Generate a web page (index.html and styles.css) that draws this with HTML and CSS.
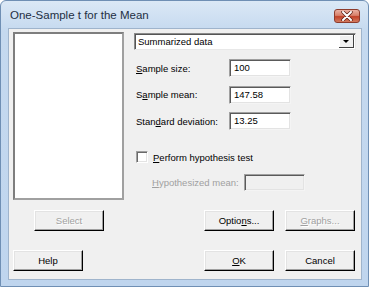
FILE: index.html
```html
<!DOCTYPE html>
<html lang="en">
<head>
    <meta charset="UTF-8">
    <title>One-Sample t for the Mean</title>
    <link rel="stylesheet" href="styles.css">
</head>
<body>
    <div class="window">
        <div class="titlebar">
            <span class="title">One-Sample t for the Mean</span>
            <span class="close">
                <svg width="12" height="10" viewBox="0 0 12 10">
                    <path d="M2 1 L10 9 M10 1 L2 9" stroke="#5a1e14" stroke-width="3.4" stroke-linecap="round"/>
                    <path d="M2 1 L10 9 M10 1 L2 9" stroke="#fff" stroke-width="2" stroke-linecap="round"/>
                </svg>
            </span>
        </div>

        <div class="client">
            <div class="main">
                <div class="varlist"></div>

                <div class="panel">
                    <div class="combo">
                        <span class="combo-text">Summarized data</span>
                        <span class="combo-btn"><span class="tri"></span></span>
                    </div>

                    <div class="fields">
                        <label class="lbl"><u>S</u>ample size:</label>
                        <div class="field">100</div>
                        <label class="lbl">S<u>a</u>mple mean:</label>
                        <div class="field">147.58</div>
                        <label class="lbl">Stan<u>d</u>ard deviation:</label>
                        <div class="field">13.25</div>
                    </div>

                    <div class="check-row">
                        <span class="checkbox"></span>
                        <span><u>P</u>erform hypothesis test</span>
                    </div>

                    <div class="hyp-row">
                        <span class="lbl disabled"><u>H</u>ypothesized mean:</span>
                        <div class="field off"></div>
                    </div>
                </div>
            </div>

            <div class="btn-row first">
                <div class="btn disabled select">Select</div>
                <div class="btn">Optio<u>n</u>s...</div>
                <div class="btn disabled"><u>G</u>raphs...</div>
            </div>

            <div class="btn-row second">
                <div class="btn help">Help</div>
                <div class="btn"><u>O</u>K</div>
                <div class="btn">Cancel</div>
            </div>
        </div>
    </div>
</body>
</html>
```

FILE: styles.css
```css
body {
    margin: 0;
    padding: 0;
    background-color: #ffffff;
    font-family: "Liberation Sans", Arial, sans-serif;
    font-size: 8.5px;
    color: #000;
}

.window {
    width: 369px;
    height: 287px;
    box-sizing: border-box;
    border: 1px solid #6f8fb4;
    border-radius: 6px 6px 0 0;
    background: linear-gradient(to bottom, #dbe8f6 0%, #c5d9ef 30px, #bfd5ee 100%);
    display: flex;
    flex-direction: column;
    padding: 0 6px 6px 7px;
}

.titlebar {
    height: 27px;
    display: flex;
    align-items: flex-start;
    justify-content: space-between;
}

.title {
    margin-top: 8px;
    margin-left: 2px;
    font-family: "Liberation Sans", Arial, sans-serif;
    font-size: 11.5px;
    color: #1e2f44;
}

.close {
    margin-top: 8px;
    margin-right: 2px;
    width: 26px;
    height: 14px;
    box-sizing: border-box;
    border: 1px solid #8d3b2c;
    border-radius: 3px;
    background: linear-gradient(to bottom, #eab0a2 0%, #d8806a 45%, #c24128 55%, #d27a5f 100%);
    display: flex;
    align-items: center;
    justify-content: center;
}

.client {
    flex: 1;
    background-color: #f0f0f0;
    border: 1px solid #9fb4cc;
    padding: 3px 5px 0 4px;
}

.main {
    display: flex;
    gap: 10px;
}

.varlist {
    width: 113px;
    height: 168px;
    box-sizing: border-box;
    background: #fff;
    border: 2px solid #8c8c8c;
    border-color: #7e7e7e #a0a0a0 #a0a0a0 #7e7e7e;
}

.panel {
    display: flex;
    flex-direction: column;
    padding-top: 1px;
}

.combo {
    width: 222px;
    height: 17px;
    box-sizing: border-box;
    background: #fff;
    border: 1px solid;
    border-color: #8a8a8a #e8e8e8 #e8e8e8 #8a8a8a;
    box-shadow: inset 1px 1px 0 #555;
    display: flex;
    justify-content: space-between;
    align-items: stretch;
}

.combo-text {
    padding-left: 3px;
    line-height: 15px;
    font-size: 9.5px;
}

.combo-btn {
    width: 14px;
    margin: 1px;
    background: #f0f0f0;
    border-right: 1px solid #404040;
    border-bottom: 1px solid #404040;
    box-shadow: inset 1px 1px 0 #fff;
    display: flex;
    align-items: center;
    justify-content: center;
}

.tri {
    width: 0;
    height: 0;
    border-left: 3px solid transparent;
    border-right: 3px solid transparent;
    border-top: 3px solid #000;
}

.fields {
    margin-top: 9px;
    display: grid;
    grid-template-columns: 93px 62px;
    row-gap: 8.5px;
    align-items: center;
    padding-left: 2px;
}

.lbl {
    font-size: 9.5px;
}

.field {
    height: 18px;
    box-sizing: border-box;
    background: #fff;
    border: 1px solid;
    border-color: #a0a0a0 #f4f4f4 #f4f4f4 #a0a0a0;
    box-shadow: inset 1px 1px 0 #5a5a5a, inset -1px -1px 0 #e3e3e3;
    padding-left: 4px;
    line-height: 16px;
    font-size: 9.5px;
}

.check-row {
    margin-top: 21px;
    padding-left: 2px;
    display: flex;
    align-items: center;
    gap: 5px;
    font-size: 9.5px;
}

.checkbox {
    width: 12px;
    height: 12px;
    box-sizing: border-box;
    background: #fff;
    border: 1px solid;
    border-color: #a0a0a0 #fff #fff #a0a0a0;
    box-shadow: inset 1px 1px 0 #6a6a6a, inset -1px -1px 0 #e3e3e3;
}

.hyp-row {
    margin-top: 11px;
    padding-left: 18px;
    display: flex;
    align-items: center;
    gap: 5px;
}

.hyp-row .field {
    width: 61px;
    height: 17px;
}

.field.off {
    background: #f0f0f0;
}

.disabled {
    color: #a0a0a0;
}

.btn-row {
    display: flex;
    justify-content: flex-end;
    gap: 11px;
    padding-right: 1px;
}

.btn-row.first {
    margin-top: 10px;
}

.btn-row.second {
    margin-top: 19px;
}

.btn {
    width: 70px;
    height: 21px;
    box-sizing: border-box;
    background: #f0f0f0;
    border: 1px solid;
    border-color: #fff #000 #000 #fff;
    box-shadow: inset -1px -1px 0 #a0a0a0, inset 1px 1px 0 #e3e3e3;
    display: flex;
    align-items: center;
    justify-content: center;
    font-size: 9.5px;
}

.btn.disabled {
    color: #a0a0a0;
    text-shadow: 1px 1px 0 #fff;
}

.btn.select {
    margin-right: auto;
    margin-left: 21px;
}

.btn.help {
    margin-right: auto;
}
```
